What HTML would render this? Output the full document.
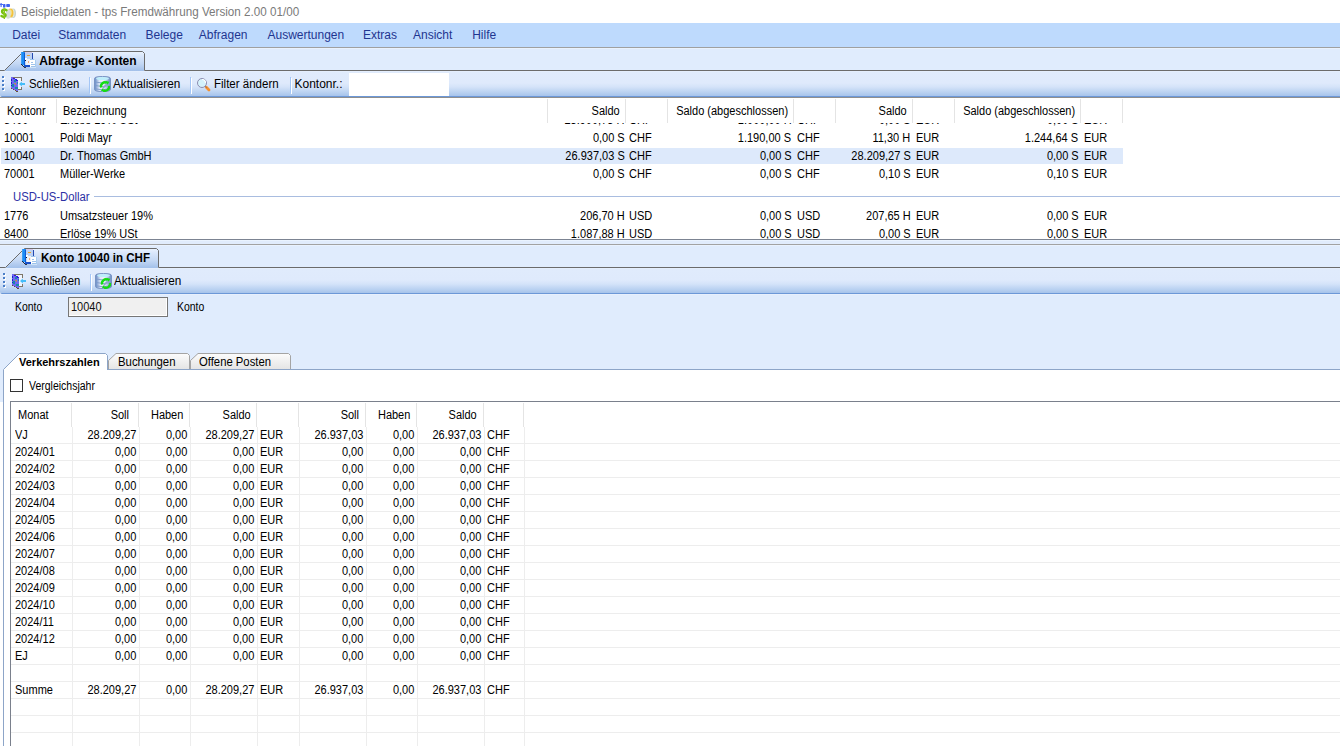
<!DOCTYPE html>
<html><head><meta charset="utf-8"><title>tps Fremdwährung</title>
<style>
html,body{margin:0;padding:0;}
body{width:1340px;height:746px;overflow:hidden;position:relative;background:#fff;font-family:"Liberation Sans", sans-serif;}
.t{position:absolute;line-height:16px;white-space:nowrap;font-family:"Liberation Sans", sans-serif;}
.g{font-size:12px !important;transform:scaleX(0.917);transform-origin:0 0;}
.gr{font-size:12px !important;transform:scaleX(0.917);transform-origin:100% 0;}
.r{position:absolute;}
svg{position:absolute;}
</style></head><body>

<div class="r" style="left:0px;top:0px;width:1340px;height:23px;background:#fff"></div>
<svg style="left:0;top:0" width="18" height="21" viewBox="0 0 18 21">
<rect x="0.5" y="3" width="1.2" height="4" fill="#4a6cf4"/>
<rect x="0" y="4" width="3" height="1" fill="#4a6cf4"/>
<rect x="3" y="4" width="2.5" height="3.5" rx="0.8" fill="#3d62f2"/>
<rect x="6.2" y="4" width="3.8" height="3" rx="0.8" fill="#3d62f2"/>
<rect x="3.5" y="7" width="1" height="1" fill="#6a88f6"/>
<ellipse cx="13" cy="13.2" rx="3" ry="4.8" fill="#c9d3cb"/>
<ellipse cx="12.3" cy="13.2" rx="2.2" ry="4.3" fill="#e6ece6"/>
<ellipse cx="10.5" cy="13" rx="3" ry="4.6" fill="#f3c23c"/>
<ellipse cx="10" cy="12.5" rx="1.8" ry="3" fill="#f8e28a"/>
<ellipse cx="8.2" cy="14" rx="2.6" ry="4.8" fill="#d6ded6"/>
<path d="M6.5 10.2 Q4.5 9 2.8 10 Q1.3 11.3 2.8 13 L5 14.2 Q6.2 15.2 5 16.4 Q3.4 17.2 1.5 16" fill="none" stroke="#78c010" stroke-width="2.4" stroke-linecap="round"/>
<rect x="3.6" y="8.5" width="1.4" height="10.5" fill="#8ac81a"/>
</svg>
<div class="t " style="top:4px;font-size:12px;color:#7a7a7a;left:21px;transform:scaleX(0.972);transform-origin:0 0;">Beispieldaten - tps Fremdwährung Version 2.00 01/00</div>
<div class="r" style="left:0px;top:23px;width:1340px;height:24px;background:#bedafd"></div>
<div class="t " style="top:27px;font-size:12px;color:#1f3590;left:12.2px;">Datei</div>
<div class="t " style="top:27px;font-size:12px;color:#1f3590;left:58.2px;">Stammdaten</div>
<div class="t " style="top:27px;font-size:12px;color:#1f3590;left:145.5px;">Belege</div>
<div class="t " style="top:27px;font-size:12px;color:#1f3590;left:198.8px;">Abfragen</div>
<div class="t " style="top:27px;font-size:12px;color:#1f3590;left:267.5px;">Auswertungen</div>
<div class="t " style="top:27px;font-size:12px;color:#1f3590;left:363px;">Extras</div>
<div class="t " style="top:27px;font-size:12px;color:#1f3590;left:413px;">Ansicht</div>
<div class="t " style="top:27px;font-size:12px;color:#1f3590;left:472.2px;">Hilfe</div>
<div class="r" style="left:0px;top:47px;width:1340px;height:1px;background:#a0a0a0"></div>
<div class="r" style="left:0px;top:48px;width:1340px;height:22px;background:#e0ecfd"></div>
<div class="r" style="left:0px;top:48px;width:1340px;height:1px;background:#e9f2fe"></div>
<svg style="left:0;top:48px" width="148" height="24" viewBox="0 0 148 24">
<defs><linearGradient id="tg48" x1="0" y1="0" x2="0" y2="1"><stop offset="0" stop-color="#e8f1fd"/><stop offset="0.2" stop-color="#dae7fb"/><stop offset="0.6" stop-color="#c4d8f4"/><stop offset="1" stop-color="#a2c0ea"/></linearGradient></defs>
<path d="M4.5 23 L23.5 4 L142 4 L144 6 L144 23 Z" fill="url(#tg48)"/>
<path d="M0 22.5 L4.5 22.5 L23.5 3.5 L142.5 3.5 L144.5 5.5 L144.5 22.5 L148 22.5" fill="none" stroke="#6b6b6b" stroke-width="1"/>
</svg>
<div class="r" style="left:145px;top:70px;width:1195px;height:1px;background:#6b6b6b"></div>
<svg style="left:20px;top:50px" width="18" height="20" viewBox="0 0 18 20" shape-rendering="crispEdges">
<rect x="1" y="2" width="4" height="13" fill="#1d8cf4"/>
<rect x="1" y="2" width="1" height="12" fill="#3aa0f8"/>
<rect x="4" y="3" width="1" height="14" fill="#0d5ad6"/>
<rect x="1" y="14" width="1" height="1" fill="#202840"/><rect x="2" y="15" width="1" height="1" fill="#202840"/><rect x="3" y="16" width="1" height="1" fill="#202840"/><rect x="4" y="17" width="2" height="1" fill="#303848"/>
<rect x="5" y="2" width="7" height="7" fill="#bcd2f2"/>
<rect x="5" y="2" width="7" height="1" fill="#d8c8e8"/>
<rect x="7" y="5" width="3" height="1" fill="#e8a030"/>
<rect x="12" y="3" width="1" height="6" fill="#2548b0"/>
<rect x="5" y="8" width="2" height="2" fill="#ffffff"/>
<rect x="5" y="10" width="1" height="1" fill="#101828"/>
<rect x="6" y="9" width="4" height="8" fill="#eef2f8"/>
<rect x="5" y="15" width="5" height="2" fill="#1a50c8"/>
<rect x="8" y="11" width="1" height="2" fill="#f0b080"/>
<rect x="10" y="9" width="5" height="1" fill="#9cc4ec"/>
<rect x="10" y="10" width="6" height="8" fill="#ffffff"/>
<rect x="15" y="10" width="1" height="8" fill="#a8cdf0"/>
<rect x="14" y="9" width="1" height="1" fill="#c8e0f6"/>
<rect x="10" y="17" width="6" height="1" fill="#d0e4f8"/>
<rect x="11" y="12" width="2" height="1" fill="#9ec2ea"/>
<rect x="11" y="14" width="4" height="1" fill="#9ec2ea"/>
<rect x="11" y="16" width="4" height="1" fill="#9ec2ea"/>
</svg>
<div class="t " style="top:53px;font-size:12px;font-weight:bold;left:39.3px;">Abfrage - Konten</div>
<div class="r" style="left:0;top:71px;width:1340px;height:26px;background:linear-gradient(#e8f1fe 0px,#e0ebfc 1px,#dfeafc 12px,#d4e3f9 16px,#b6cff0 22px,#a6c3eb 25px,#6c98d8 25px);border-bottom-left-radius:2px"></div>
<div class="r" style="left:2px;top:76px;width:2px;height:2px;background:#4a7ec8;box-shadow:1px 1px 0 #fff"></div>
<div class="r" style="left:2px;top:80px;width:2px;height:2px;background:#4a7ec8;box-shadow:1px 1px 0 #fff"></div>
<div class="r" style="left:2px;top:84px;width:2px;height:2px;background:#4a7ec8;box-shadow:1px 1px 0 #fff"></div>
<div class="r" style="left:2px;top:88px;width:2px;height:2px;background:#4a7ec8;box-shadow:1px 1px 0 #fff"></div>
<svg style="left:11px;top:77px" width="16" height="16" viewBox="0 0 16 16" shape-rendering="crispEdges">
<rect x="0" y="0" width="11" height="1" fill="#7d7566"/>
<rect x="10" y="0" width="1" height="4" fill="#7d7566"/>
<rect x="10" y="10" width="1" height="3" fill="#7d7566"/>
<rect x="7" y="12" width="4" height="1" fill="#7d7566"/>
<rect x="7" y="1" width="3" height="11" fill="#eef4fe"/>
<path d="M0 0 H2 V1 H4 V2 H5 V3 H7 V15 H5 V14 H4 V13 H2 V12 H0 Z" fill="#6f66f2"/>
<rect x="0" y="2" width="1" height="2" fill="#1428c8"/>
<rect x="0" y="5" width="1" height="2" fill="#1428c8"/>
<rect x="0" y="8" width="1" height="1" fill="#1428c8"/>
<rect x="2" y="1" width="2" height="1" fill="#2a18e0"/>
<rect x="4" y="2" width="2" height="1" fill="#2a18e0"/>
<rect x="5" y="3" width="2" height="1" fill="#2a18e0"/>
<rect x="3" y="3" width="2" height="2" fill="#1a8aa8"/>
<rect x="1" y="7" width="2" height="3" fill="#1a8aa8"/>
<rect x="4" y="10" width="3" height="2" fill="#1a8aa8"/>
<rect x="6" y="5" width="1" height="2" fill="#1a8aa8"/>
<rect x="3" y="6" width="2" height="1" fill="#b09060"/>
<rect x="4" y="7" width="1" height="1" fill="#b09060"/>
<rect x="0" y="11" width="1" height="1" fill="#6a5030"/><rect x="2" y="12" width="1" height="1" fill="#6a5030"/><rect x="4" y="13" width="1" height="1" fill="#6a5030"/><rect x="5" y="14" width="2" height="1" fill="#6a5030"/>
<path d="M8 7 L10.8 4.6 L10.8 6 L14 6 L14 8 L10.8 8 L10.8 9.4 Z" fill="#44bcf8" shape-rendering="auto"/>
</svg>
<div class="t " style="top:76px;font-size:12px;left:28.5px;transform:scaleX(0.944);transform-origin:0 0;">Schließen</div>
<div class="r" style="left:89px;top:77px;width:1px;height:16px;background:#a4c6f6"></div>
<div class="r" style="left:90px;top:78px;width:1px;height:16px;background:#ffffff"></div>
<svg style="left:94px;top:76px" width="17" height="17" viewBox="0 0 17 17">
<defs><linearGradient id="dbg76" x1="0" y1="0" x2="1" y2="0"><stop offset="0" stop-color="#5f84c2"/><stop offset="0.3" stop-color="#dfe8f8"/><stop offset="0.55" stop-color="#eef3fb"/><stop offset="1" stop-color="#6a8cc4"/></linearGradient></defs>
<path d="M0.5 2.5 Q0.5 0.5 8.5 0.5 Q16.5 0.5 16.5 2.5 L16.5 13.5 Q16.5 15.5 8.5 15.5 Q0.5 15.5 0.5 13.5 Z" fill="url(#dbg76)" stroke="#7894c4" stroke-width="1"/>
<ellipse cx="8.5" cy="2.6" rx="6.5" ry="1.5" fill="#bdeefb"/>
<path d="M1 6 Q8 8 16 6 M1 9.5 Q8 11.5 16 9.5 M1 12.8 Q8 14.8 16 12.8" stroke="#7b98c8" stroke-width="0.9" fill="none"/>
<path d="M7.2 11.5 A3.9 3.9 0 0 1 13 7" fill="none" stroke="#14dc14" stroke-width="2.4"/>
<path d="M15 10 A3.9 3.9 0 0 1 9.5 14.3" fill="none" stroke="#14dc14" stroke-width="2.4"/>
<path d="M11.5 5 L15.3 5.8 L13.6 9 Z" fill="#14dc14"/>
<path d="M10.5 16 L6.8 14.6 L9 12 Z" fill="#14dc14"/>
<path d="M8.8 12.2 L13 8" stroke="#8fa4cc" stroke-width="1.6"/>
</svg>
<div class="t " style="top:76px;font-size:12px;left:112.8px;transform:scaleX(0.98);transform-origin:0 0;">Aktualisieren</div>
<div class="r" style="left:190px;top:77px;width:1px;height:16px;background:#a4c6f6"></div>
<div class="r" style="left:191px;top:78px;width:1px;height:16px;background:#ffffff"></div>
<svg style="left:196px;top:77px" width="16" height="16" viewBox="0 0 16 16">
<circle cx="6" cy="6" r="4.5" fill="#d4f2fc" stroke="#8c8cb0" stroke-width="1"/>
<path d="M6 2.5 A3.5 3.5 0 0 1 9.5 6" stroke="#ffffff" stroke-width="1.2" fill="none"/>
<path d="M10.3 10.3 L13 13" stroke="#f5902e" stroke-width="2.8" stroke-linecap="round"/>
<path d="M9.5 9.5 L10.5 10.5" stroke="#606080" stroke-width="1"/>
</svg>
<div class="t " style="top:76px;font-size:12px;left:214.3px;transform:scaleX(0.96);transform-origin:0 0;">Filter ändern</div>
<div class="r" style="left:290px;top:77px;width:1px;height:16px;background:#a4c6f6"></div>
<div class="r" style="left:291px;top:78px;width:1px;height:16px;background:#ffffff"></div>
<div class="t " style="top:76px;font-size:12px;left:294.5px;">Kontonr.:</div>
<div class="r" style="left:349px;top:73px;width:100px;height:23px;background:#fff"></div>
<div class="r" style="left:0px;top:97px;width:1340px;height:1px;background:#8e8e8e"></div>
<div class="r" style="left:0px;top:98px;width:1340px;height:141px;background:#fff"></div>
<div class="r" style="left:56px;top:99px;width:1px;height:24px;background:#e4e4e4"></div>
<div class="r" style="left:547px;top:99px;width:1px;height:24px;background:#e4e4e4"></div>
<div class="r" style="left:625px;top:99px;width:1px;height:24px;background:#e4e4e4"></div>
<div class="r" style="left:667px;top:99px;width:1px;height:24px;background:#e4e4e4"></div>
<div class="r" style="left:793px;top:99px;width:1px;height:24px;background:#e4e4e4"></div>
<div class="r" style="left:835px;top:99px;width:1px;height:24px;background:#e4e4e4"></div>
<div class="r" style="left:912px;top:99px;width:1px;height:24px;background:#e4e4e4"></div>
<div class="r" style="left:954px;top:99px;width:1px;height:24px;background:#e4e4e4"></div>
<div class="r" style="left:1080px;top:99px;width:1px;height:24px;background:#e4e4e4"></div>
<div class="r" style="left:1122px;top:99px;width:1px;height:24px;background:#e4e4e4"></div>
<div class="t g" style="top:103px;font-size:11px;left:7.2px;">Kontonr</div>
<div class="t g" style="top:103px;font-size:11px;left:63px;">Bezeichnung</div>
<div class="t gr" style="top:103px;font-size:11px;right:720.5px;text-align:right;">Saldo</div>
<div class="t gr" style="top:103px;font-size:11px;right:433.5px;text-align:right;">Saldo</div>
<div class="t gr" style="top:103px;font-size:11px;right:552px;text-align:right;">Saldo (abgeschlossen)</div>
<div class="t gr" style="top:103px;font-size:11px;right:265px;text-align:right;">Saldo (abgeschlossen)</div>
<div class="r" style="left:0;top:123px;width:1340px;height:116px;overflow:hidden">
<div class="t g" style="left:3.8px;top:-11px">8400</div>
<div class="t g" style="left:60px;top:-11px">Erlöse 19% USt</div>
<div class="t gr" style="right:715.5px;top:-11px;text-align:right">23.900,73 H</div>
<div class="t gr" style="right:548.5px;top:-11px;text-align:right">1.000,00 H</div>
<div class="t gr" style="right:429.5px;top:-11px;text-align:right">0,00 S</div>
<div class="t gr" style="right:261.5px;top:-11px;text-align:right">0,00 S</div>
<div class="t g" style="left:628.5px;top:-11px">CHF</div>
<div class="t g" style="left:796.5px;top:-11px">CHF</div>
<div class="t g" style="left:915.5px;top:-11px">EUR</div>
<div class="t g" style="left:1083.5px;top:-11px">EUR</div>
<div class="t g" style="left:3.8px;top:7px">10001</div>
<div class="t g" style="left:60px;top:7px">Poldi Mayr</div>
<div class="t gr" style="right:715.5px;top:7px;text-align:right">0,00 S</div>
<div class="t gr" style="right:548.5px;top:7px;text-align:right">1.190,00 S</div>
<div class="t gr" style="right:429.5px;top:7px;text-align:right">11,30 H</div>
<div class="t gr" style="right:261.5px;top:7px;text-align:right">1.244,64 S</div>
<div class="t g" style="left:628.5px;top:7px">CHF</div>
<div class="t g" style="left:796.5px;top:7px">CHF</div>
<div class="t g" style="left:915.5px;top:7px">EUR</div>
<div class="t g" style="left:1083.5px;top:7px">EUR</div>
<div class="r" style="left:1px;top:25px;width:1122px;height:16px;background:#dde9fb"></div>
<div class="t g" style="left:3.8px;top:25px">10040</div>
<div class="t g" style="left:60px;top:25px">Dr. Thomas GmbH</div>
<div class="t gr" style="right:715.5px;top:25px;text-align:right">26.937,03 S</div>
<div class="t gr" style="right:548.5px;top:25px;text-align:right">0,00 S</div>
<div class="t gr" style="right:429.5px;top:25px;text-align:right">28.209,27 S</div>
<div class="t gr" style="right:261.5px;top:25px;text-align:right">0,00 S</div>
<div class="t g" style="left:628.5px;top:25px">CHF</div>
<div class="t g" style="left:796.5px;top:25px">CHF</div>
<div class="t g" style="left:915.5px;top:25px">EUR</div>
<div class="t g" style="left:1083.5px;top:25px">EUR</div>
<div class="t g" style="left:3.8px;top:43px">70001</div>
<div class="t g" style="left:60px;top:43px">Müller-Werke</div>
<div class="t gr" style="right:715.5px;top:43px;text-align:right">0,00 S</div>
<div class="t gr" style="right:548.5px;top:43px;text-align:right">0,00 S</div>
<div class="t gr" style="right:429.5px;top:43px;text-align:right">0,10 S</div>
<div class="t gr" style="right:261.5px;top:43px;text-align:right">0,10 S</div>
<div class="t g" style="left:628.5px;top:43px">CHF</div>
<div class="t g" style="left:796.5px;top:43px">CHF</div>
<div class="t g" style="left:915.5px;top:43px">EUR</div>
<div class="t g" style="left:1083.5px;top:43px">EUR</div>
<div class="t" style="left:12.5px;top:66px;font-size:12px;color:#2c30a4;transform:scaleX(0.942);transform-origin:0 0">USD-US-Dollar</div>
<div class="r" style="left:94px;top:73px;width:1246px;height:1px;background:#a9bde0"></div>
<div class="t g" style="left:3.8px;top:85px">1776</div>
<div class="t g" style="left:60px;top:85px">Umsatzsteuer 19%</div>
<div class="t gr" style="right:715.5px;top:85px;text-align:right">206,70 H</div>
<div class="t gr" style="right:548.5px;top:85px;text-align:right">0,00 S</div>
<div class="t gr" style="right:429.5px;top:85px;text-align:right">207,65 H</div>
<div class="t gr" style="right:261.5px;top:85px;text-align:right">0,00 S</div>
<div class="t g" style="left:628.5px;top:85px">USD</div>
<div class="t g" style="left:796.5px;top:85px">USD</div>
<div class="t g" style="left:915.5px;top:85px">EUR</div>
<div class="t g" style="left:1083.5px;top:85px">EUR</div>
<div class="t g" style="left:3.8px;top:103px">8400</div>
<div class="t g" style="left:60px;top:103px">Erlöse 19% USt</div>
<div class="t gr" style="right:715.5px;top:103px;text-align:right">1.087,88 H</div>
<div class="t gr" style="right:548.5px;top:103px;text-align:right">0,00 S</div>
<div class="t gr" style="right:429.5px;top:103px;text-align:right">0,00 S</div>
<div class="t gr" style="right:261.5px;top:103px;text-align:right">0,00 S</div>
<div class="t g" style="left:628.5px;top:103px">USD</div>
<div class="t g" style="left:796.5px;top:103px">USD</div>
<div class="t g" style="left:915.5px;top:103px">EUR</div>
<div class="t g" style="left:1083.5px;top:103px">EUR</div>
</div>
<div class="r" style="left:0px;top:239px;width:1340px;height:1px;background:#7c8492"></div>
<div class="r" style="left:0px;top:240px;width:1340px;height:4px;background:#e1ecfc"></div>
<div class="r" style="left:0px;top:240px;width:1340px;height:1px;background:#eaf3fe"></div>
<div class="r" style="left:0px;top:244px;width:1340px;height:1px;background:#a2a2a2"></div>
<div class="r" style="left:0px;top:245px;width:1340px;height:22px;background:#e0ecfd"></div>
<div class="r" style="left:0px;top:245px;width:1340px;height:1px;background:#e9f2fe"></div>
<svg style="left:0;top:245px" width="162" height="24" viewBox="0 0 162 24">
<defs><linearGradient id="tg245" x1="0" y1="0" x2="0" y2="1"><stop offset="0" stop-color="#e8f1fd"/><stop offset="0.2" stop-color="#dae7fb"/><stop offset="0.6" stop-color="#c4d8f4"/><stop offset="1" stop-color="#a2c0ea"/></linearGradient></defs>
<path d="M5.5 23 L24.5 4 L156 4 L158 6 L158 23 Z" fill="url(#tg245)"/>
<path d="M0 22.5 L5.5 22.5 L24.5 3.5 L156.5 3.5 L158.5 5.5 L158.5 22.5 L162 22.5" fill="none" stroke="#6b6b6b" stroke-width="1"/>
</svg>
<div class="r" style="left:159px;top:267px;width:1181px;height:1px;background:#6b6b6b"></div>
<svg style="left:21px;top:247px" width="18" height="20" viewBox="0 0 18 20" shape-rendering="crispEdges">
<rect x="1" y="2" width="4" height="13" fill="#1d8cf4"/>
<rect x="1" y="2" width="1" height="12" fill="#3aa0f8"/>
<rect x="4" y="3" width="1" height="14" fill="#0d5ad6"/>
<rect x="1" y="14" width="1" height="1" fill="#202840"/><rect x="2" y="15" width="1" height="1" fill="#202840"/><rect x="3" y="16" width="1" height="1" fill="#202840"/><rect x="4" y="17" width="2" height="1" fill="#303848"/>
<rect x="5" y="2" width="7" height="7" fill="#bcd2f2"/>
<rect x="5" y="2" width="7" height="1" fill="#d8c8e8"/>
<rect x="7" y="5" width="3" height="1" fill="#e8a030"/>
<rect x="12" y="3" width="1" height="6" fill="#2548b0"/>
<rect x="5" y="8" width="2" height="2" fill="#ffffff"/>
<rect x="5" y="10" width="1" height="1" fill="#101828"/>
<rect x="6" y="9" width="4" height="8" fill="#eef2f8"/>
<rect x="5" y="15" width="5" height="2" fill="#1a50c8"/>
<rect x="8" y="11" width="1" height="2" fill="#f0b080"/>
<rect x="10" y="9" width="5" height="1" fill="#9cc4ec"/>
<rect x="10" y="10" width="6" height="8" fill="#ffffff"/>
<rect x="15" y="10" width="1" height="8" fill="#a8cdf0"/>
<rect x="14" y="9" width="1" height="1" fill="#c8e0f6"/>
<rect x="10" y="17" width="6" height="1" fill="#d0e4f8"/>
<rect x="11" y="12" width="2" height="1" fill="#9ec2ea"/>
<rect x="11" y="14" width="4" height="1" fill="#9ec2ea"/>
<rect x="11" y="16" width="4" height="1" fill="#9ec2ea"/>
</svg>
<div class="t " style="top:250px;font-size:12px;font-weight:bold;left:41px;transform:scaleX(0.961);transform-origin:0 0;">Konto 10040 in CHF</div>
<div class="r" style="left:0;top:268px;width:1340px;height:26px;background:linear-gradient(#e8f1fe 0px,#e0ebfc 1px,#dfeafc 12px,#d4e3f9 16px,#b6cff0 22px,#a6c3eb 25px,#6c98d8 25px);border-bottom-left-radius:2px"></div>
<div class="r" style="left:3px;top:273px;width:2px;height:2px;background:#4a7ec8;box-shadow:1px 1px 0 #fff"></div>
<div class="r" style="left:3px;top:277px;width:2px;height:2px;background:#4a7ec8;box-shadow:1px 1px 0 #fff"></div>
<div class="r" style="left:3px;top:281px;width:2px;height:2px;background:#4a7ec8;box-shadow:1px 1px 0 #fff"></div>
<div class="r" style="left:3px;top:285px;width:2px;height:2px;background:#4a7ec8;box-shadow:1px 1px 0 #fff"></div>
<svg style="left:12px;top:274px" width="16" height="16" viewBox="0 0 16 16" shape-rendering="crispEdges">
<rect x="0" y="0" width="11" height="1" fill="#7d7566"/>
<rect x="10" y="0" width="1" height="4" fill="#7d7566"/>
<rect x="10" y="10" width="1" height="3" fill="#7d7566"/>
<rect x="7" y="12" width="4" height="1" fill="#7d7566"/>
<rect x="7" y="1" width="3" height="11" fill="#eef4fe"/>
<path d="M0 0 H2 V1 H4 V2 H5 V3 H7 V15 H5 V14 H4 V13 H2 V12 H0 Z" fill="#6f66f2"/>
<rect x="0" y="2" width="1" height="2" fill="#1428c8"/>
<rect x="0" y="5" width="1" height="2" fill="#1428c8"/>
<rect x="0" y="8" width="1" height="1" fill="#1428c8"/>
<rect x="2" y="1" width="2" height="1" fill="#2a18e0"/>
<rect x="4" y="2" width="2" height="1" fill="#2a18e0"/>
<rect x="5" y="3" width="2" height="1" fill="#2a18e0"/>
<rect x="3" y="3" width="2" height="2" fill="#1a8aa8"/>
<rect x="1" y="7" width="2" height="3" fill="#1a8aa8"/>
<rect x="4" y="10" width="3" height="2" fill="#1a8aa8"/>
<rect x="6" y="5" width="1" height="2" fill="#1a8aa8"/>
<rect x="3" y="6" width="2" height="1" fill="#b09060"/>
<rect x="4" y="7" width="1" height="1" fill="#b09060"/>
<rect x="0" y="11" width="1" height="1" fill="#6a5030"/><rect x="2" y="12" width="1" height="1" fill="#6a5030"/><rect x="4" y="13" width="1" height="1" fill="#6a5030"/><rect x="5" y="14" width="2" height="1" fill="#6a5030"/>
<path d="M8 7 L10.8 4.6 L10.8 6 L14 6 L14 8 L10.8 8 L10.8 9.4 Z" fill="#44bcf8" shape-rendering="auto"/>
</svg>
<div class="t " style="top:273px;font-size:12px;left:29.5px;transform:scaleX(0.944);transform-origin:0 0;">Schließen</div>
<div class="r" style="left:90px;top:274px;width:1px;height:16px;background:#a4c6f6"></div>
<div class="r" style="left:91px;top:275px;width:1px;height:16px;background:#ffffff"></div>
<svg style="left:95px;top:273px" width="17" height="17" viewBox="0 0 17 17">
<defs><linearGradient id="dbg273" x1="0" y1="0" x2="1" y2="0"><stop offset="0" stop-color="#5f84c2"/><stop offset="0.3" stop-color="#dfe8f8"/><stop offset="0.55" stop-color="#eef3fb"/><stop offset="1" stop-color="#6a8cc4"/></linearGradient></defs>
<path d="M0.5 2.5 Q0.5 0.5 8.5 0.5 Q16.5 0.5 16.5 2.5 L16.5 13.5 Q16.5 15.5 8.5 15.5 Q0.5 15.5 0.5 13.5 Z" fill="url(#dbg273)" stroke="#7894c4" stroke-width="1"/>
<ellipse cx="8.5" cy="2.6" rx="6.5" ry="1.5" fill="#bdeefb"/>
<path d="M1 6 Q8 8 16 6 M1 9.5 Q8 11.5 16 9.5 M1 12.8 Q8 14.8 16 12.8" stroke="#7b98c8" stroke-width="0.9" fill="none"/>
<path d="M7.2 11.5 A3.9 3.9 0 0 1 13 7" fill="none" stroke="#14dc14" stroke-width="2.4"/>
<path d="M15 10 A3.9 3.9 0 0 1 9.5 14.3" fill="none" stroke="#14dc14" stroke-width="2.4"/>
<path d="M11.5 5 L15.3 5.8 L13.6 9 Z" fill="#14dc14"/>
<path d="M10.5 16 L6.8 14.6 L9 12 Z" fill="#14dc14"/>
<path d="M8.8 12.2 L13 8" stroke="#8fa4cc" stroke-width="1.6"/>
</svg>
<div class="t " style="top:273px;font-size:12px;left:113.8px;transform:scaleX(0.98);transform-origin:0 0;">Aktualisieren</div>
<div class="r" style="left:0px;top:294px;width:1340px;height:108px;background:#e0ecfd"></div>
<div class="r" style="left:0px;top:294px;width:1340px;height:1px;background:#e8f0fd"></div>
<div class="t " style="top:299px;font-size:12px;left:15px;transform:scaleX(0.87);transform-origin:0 0;">Konto</div>
<div class="r" style="left:68px;top:297px;width:100px;height:20px;background:#f0f0f0;box-sizing:border-box;border:1px solid #767676;box-shadow:inset -1px -1px 0 #fff"></div>
<div class="t g" style="top:299px;font-size:11px;color:#111;left:71px;">10040</div>
<div class="t " style="top:299px;font-size:12px;left:177px;transform:scaleX(0.87);transform-origin:0 0;">Konto</div>
<svg style="left:0;top:350px" width="300" height="21" viewBox="0 0 300 21">
<defs><linearGradient id="ut" x1="0" y1="0" x2="0" y2="1"><stop offset="0" stop-color="#fcfcfc"/><stop offset="1" stop-color="#e4e4e4"/></linearGradient></defs>
<path d="M108.5 19.5 L108.5 10.5 L116 3.5 L187.5 3.5 L189.5 5.5 L189.5 19.5 Z" fill="url(#ut)" stroke="#a4a4a4" stroke-width="1"/>
<path d="M190.5 19.5 L190.5 10.5 L198 3.5 L288.5 3.5 L290.5 5.5 L290.5 19.5 Z" fill="url(#ut)" stroke="#a4a4a4" stroke-width="1"/>
<path d="M3 21 L3 20 L19.5 3.5 L105.5 3.5 L107.5 5.5 L107.5 21 Z" fill="#fff"/>
<path d="M3.5 21 L3.5 19.5 L19.5 3.5 L105.5 3.5 L107.5 5.5 L107.5 19.5" fill="none" stroke="#8da5c8" stroke-width="1"/>
</svg>
<div class="t " style="top:354px;font-size:11px;font-weight:bold;left:19px;">Verkehrszahlen</div>
<div class="t " style="top:354px;font-size:12px;left:117.5px;transform:scaleX(0.947);transform-origin:0 0;">Buchungen</div>
<div class="t " style="top:354px;font-size:12px;left:199.4px;transform:scaleX(0.941);transform-origin:0 0;">Offene Posten</div>
<div class="r" style="left:3px;top:370px;width:1337px;height:376px;background:#fff;box-sizing:border-box;border-left:1px solid #8da5c8"></div>
<div class="r" style="left:107px;top:369px;width:1233px;height:1px;background:#8da5c8"></div>
<div class="r" style="left:10px;top:379px;width:13px;height:13px;background:#fff;box-sizing:border-box;border:1px solid #333"></div>
<div class="t " style="top:378px;font-size:12px;left:28.5px;transform:scaleX(0.875);transform-origin:0 0;">Vergleichsjahr</div>
<div class="r" style="left:10px;top:401px;width:1330px;height:345px;background:#fff;box-sizing:border-box;border-left:1px solid #7a808c;border-top:1px solid #7a808c"></div>
<div class="r" style="left:71px;top:403px;width:1px;height:24px;background:#e4e4e4"></div>
<div class="r" style="left:138px;top:403px;width:1px;height:24px;background:#e4e4e4"></div>
<div class="r" style="left:189px;top:403px;width:1px;height:24px;background:#e4e4e4"></div>
<div class="r" style="left:256px;top:403px;width:1px;height:24px;background:#e4e4e4"></div>
<div class="r" style="left:298px;top:403px;width:1px;height:24px;background:#e4e4e4"></div>
<div class="r" style="left:365px;top:403px;width:1px;height:24px;background:#e4e4e4"></div>
<div class="r" style="left:416px;top:403px;width:1px;height:24px;background:#e4e4e4"></div>
<div class="r" style="left:483px;top:403px;width:1px;height:24px;background:#e4e4e4"></div>
<div class="r" style="left:523px;top:403px;width:1px;height:24px;background:#e4e4e4"></div>
<div class="t g" style="top:407px;font-size:11px;left:17.5px;">Monat</div>
<div class="t gr" style="top:407px;font-size:11px;right:1210.5px;text-align:right;">Soll</div>
<div class="t gr" style="top:407px;font-size:11px;right:1156.5px;text-align:right;">Haben</div>
<div class="t gr" style="top:407px;font-size:11px;right:1089.7px;text-align:right;">Saldo</div>
<div class="t gr" style="top:407px;font-size:11px;right:980.5px;text-align:right;">Soll</div>
<div class="t gr" style="top:407px;font-size:11px;right:929.7px;text-align:right;">Haben</div>
<div class="t gr" style="top:407px;font-size:11px;right:863px;text-align:right;">Saldo</div>
<div class="r" style="left:72px;top:427px;width:1px;height:319px;background:#ededed"></div>
<div class="r" style="left:139px;top:427px;width:1px;height:319px;background:#ededed"></div>
<div class="r" style="left:190px;top:427px;width:1px;height:319px;background:#ededed"></div>
<div class="r" style="left:257px;top:427px;width:1px;height:319px;background:#ededed"></div>
<div class="r" style="left:299px;top:427px;width:1px;height:319px;background:#ededed"></div>
<div class="r" style="left:366px;top:427px;width:1px;height:319px;background:#ededed"></div>
<div class="r" style="left:417px;top:427px;width:1px;height:319px;background:#ededed"></div>
<div class="r" style="left:484px;top:427px;width:1px;height:319px;background:#ededed"></div>
<div class="r" style="left:524px;top:427px;width:1px;height:319px;background:#ededed"></div>
<div class="r" style="left:11px;top:443px;width:1329px;height:1px;background:#ededed"></div>
<div class="r" style="left:11px;top:460px;width:1329px;height:1px;background:#ededed"></div>
<div class="r" style="left:11px;top:477px;width:1329px;height:1px;background:#ededed"></div>
<div class="r" style="left:11px;top:494px;width:1329px;height:1px;background:#ededed"></div>
<div class="r" style="left:11px;top:511px;width:1329px;height:1px;background:#ededed"></div>
<div class="r" style="left:11px;top:528px;width:1329px;height:1px;background:#ededed"></div>
<div class="r" style="left:11px;top:545px;width:1329px;height:1px;background:#ededed"></div>
<div class="r" style="left:11px;top:562px;width:1329px;height:1px;background:#ededed"></div>
<div class="r" style="left:11px;top:579px;width:1329px;height:1px;background:#ededed"></div>
<div class="r" style="left:11px;top:596px;width:1329px;height:1px;background:#ededed"></div>
<div class="r" style="left:11px;top:613px;width:1329px;height:1px;background:#ededed"></div>
<div class="r" style="left:11px;top:630px;width:1329px;height:1px;background:#ededed"></div>
<div class="r" style="left:11px;top:647px;width:1329px;height:1px;background:#ededed"></div>
<div class="r" style="left:11px;top:664px;width:1329px;height:1px;background:#ededed"></div>
<div class="r" style="left:11px;top:681px;width:1329px;height:1px;background:#ededed"></div>
<div class="r" style="left:11px;top:698px;width:1329px;height:1px;background:#ededed"></div>
<div class="r" style="left:11px;top:715px;width:1329px;height:1px;background:#ededed"></div>
<div class="r" style="left:11px;top:732px;width:1329px;height:1px;background:#ededed"></div>
<div class="t g" style="top:427px;font-size:11px;left:15px;">VJ</div>
<div class="t gr" style="top:427px;font-size:11px;right:1203.7px;text-align:right;">28.209,27</div>
<div class="t gr" style="top:427px;font-size:11px;right:1152.7px;text-align:right;">0,00</div>
<div class="t gr" style="top:427px;font-size:11px;right:1085.7px;text-align:right;">28.209,27</div>
<div class="t g" style="top:427px;font-size:11px;left:259.5px;">EUR</div>
<div class="t gr" style="top:427px;font-size:11px;right:976.7px;text-align:right;">26.937,03</div>
<div class="t gr" style="top:427px;font-size:11px;right:925.7px;text-align:right;">0,00</div>
<div class="t gr" style="top:427px;font-size:11px;right:858.7px;text-align:right;">26.937,03</div>
<div class="t g" style="top:427px;font-size:11px;left:486.5px;">CHF</div>
<div class="t g" style="top:444px;font-size:11px;left:15px;">2024/01</div>
<div class="t gr" style="top:444px;font-size:11px;right:1203.7px;text-align:right;">0,00</div>
<div class="t gr" style="top:444px;font-size:11px;right:1152.7px;text-align:right;">0,00</div>
<div class="t gr" style="top:444px;font-size:11px;right:1085.7px;text-align:right;">0,00</div>
<div class="t g" style="top:444px;font-size:11px;left:259.5px;">EUR</div>
<div class="t gr" style="top:444px;font-size:11px;right:976.7px;text-align:right;">0,00</div>
<div class="t gr" style="top:444px;font-size:11px;right:925.7px;text-align:right;">0,00</div>
<div class="t gr" style="top:444px;font-size:11px;right:858.7px;text-align:right;">0,00</div>
<div class="t g" style="top:444px;font-size:11px;left:486.5px;">CHF</div>
<div class="t g" style="top:461px;font-size:11px;left:15px;">2024/02</div>
<div class="t gr" style="top:461px;font-size:11px;right:1203.7px;text-align:right;">0,00</div>
<div class="t gr" style="top:461px;font-size:11px;right:1152.7px;text-align:right;">0,00</div>
<div class="t gr" style="top:461px;font-size:11px;right:1085.7px;text-align:right;">0,00</div>
<div class="t g" style="top:461px;font-size:11px;left:259.5px;">EUR</div>
<div class="t gr" style="top:461px;font-size:11px;right:976.7px;text-align:right;">0,00</div>
<div class="t gr" style="top:461px;font-size:11px;right:925.7px;text-align:right;">0,00</div>
<div class="t gr" style="top:461px;font-size:11px;right:858.7px;text-align:right;">0,00</div>
<div class="t g" style="top:461px;font-size:11px;left:486.5px;">CHF</div>
<div class="t g" style="top:478px;font-size:11px;left:15px;">2024/03</div>
<div class="t gr" style="top:478px;font-size:11px;right:1203.7px;text-align:right;">0,00</div>
<div class="t gr" style="top:478px;font-size:11px;right:1152.7px;text-align:right;">0,00</div>
<div class="t gr" style="top:478px;font-size:11px;right:1085.7px;text-align:right;">0,00</div>
<div class="t g" style="top:478px;font-size:11px;left:259.5px;">EUR</div>
<div class="t gr" style="top:478px;font-size:11px;right:976.7px;text-align:right;">0,00</div>
<div class="t gr" style="top:478px;font-size:11px;right:925.7px;text-align:right;">0,00</div>
<div class="t gr" style="top:478px;font-size:11px;right:858.7px;text-align:right;">0,00</div>
<div class="t g" style="top:478px;font-size:11px;left:486.5px;">CHF</div>
<div class="t g" style="top:495px;font-size:11px;left:15px;">2024/04</div>
<div class="t gr" style="top:495px;font-size:11px;right:1203.7px;text-align:right;">0,00</div>
<div class="t gr" style="top:495px;font-size:11px;right:1152.7px;text-align:right;">0,00</div>
<div class="t gr" style="top:495px;font-size:11px;right:1085.7px;text-align:right;">0,00</div>
<div class="t g" style="top:495px;font-size:11px;left:259.5px;">EUR</div>
<div class="t gr" style="top:495px;font-size:11px;right:976.7px;text-align:right;">0,00</div>
<div class="t gr" style="top:495px;font-size:11px;right:925.7px;text-align:right;">0,00</div>
<div class="t gr" style="top:495px;font-size:11px;right:858.7px;text-align:right;">0,00</div>
<div class="t g" style="top:495px;font-size:11px;left:486.5px;">CHF</div>
<div class="t g" style="top:512px;font-size:11px;left:15px;">2024/05</div>
<div class="t gr" style="top:512px;font-size:11px;right:1203.7px;text-align:right;">0,00</div>
<div class="t gr" style="top:512px;font-size:11px;right:1152.7px;text-align:right;">0,00</div>
<div class="t gr" style="top:512px;font-size:11px;right:1085.7px;text-align:right;">0,00</div>
<div class="t g" style="top:512px;font-size:11px;left:259.5px;">EUR</div>
<div class="t gr" style="top:512px;font-size:11px;right:976.7px;text-align:right;">0,00</div>
<div class="t gr" style="top:512px;font-size:11px;right:925.7px;text-align:right;">0,00</div>
<div class="t gr" style="top:512px;font-size:11px;right:858.7px;text-align:right;">0,00</div>
<div class="t g" style="top:512px;font-size:11px;left:486.5px;">CHF</div>
<div class="t g" style="top:529px;font-size:11px;left:15px;">2024/06</div>
<div class="t gr" style="top:529px;font-size:11px;right:1203.7px;text-align:right;">0,00</div>
<div class="t gr" style="top:529px;font-size:11px;right:1152.7px;text-align:right;">0,00</div>
<div class="t gr" style="top:529px;font-size:11px;right:1085.7px;text-align:right;">0,00</div>
<div class="t g" style="top:529px;font-size:11px;left:259.5px;">EUR</div>
<div class="t gr" style="top:529px;font-size:11px;right:976.7px;text-align:right;">0,00</div>
<div class="t gr" style="top:529px;font-size:11px;right:925.7px;text-align:right;">0,00</div>
<div class="t gr" style="top:529px;font-size:11px;right:858.7px;text-align:right;">0,00</div>
<div class="t g" style="top:529px;font-size:11px;left:486.5px;">CHF</div>
<div class="t g" style="top:546px;font-size:11px;left:15px;">2024/07</div>
<div class="t gr" style="top:546px;font-size:11px;right:1203.7px;text-align:right;">0,00</div>
<div class="t gr" style="top:546px;font-size:11px;right:1152.7px;text-align:right;">0,00</div>
<div class="t gr" style="top:546px;font-size:11px;right:1085.7px;text-align:right;">0,00</div>
<div class="t g" style="top:546px;font-size:11px;left:259.5px;">EUR</div>
<div class="t gr" style="top:546px;font-size:11px;right:976.7px;text-align:right;">0,00</div>
<div class="t gr" style="top:546px;font-size:11px;right:925.7px;text-align:right;">0,00</div>
<div class="t gr" style="top:546px;font-size:11px;right:858.7px;text-align:right;">0,00</div>
<div class="t g" style="top:546px;font-size:11px;left:486.5px;">CHF</div>
<div class="t g" style="top:563px;font-size:11px;left:15px;">2024/08</div>
<div class="t gr" style="top:563px;font-size:11px;right:1203.7px;text-align:right;">0,00</div>
<div class="t gr" style="top:563px;font-size:11px;right:1152.7px;text-align:right;">0,00</div>
<div class="t gr" style="top:563px;font-size:11px;right:1085.7px;text-align:right;">0,00</div>
<div class="t g" style="top:563px;font-size:11px;left:259.5px;">EUR</div>
<div class="t gr" style="top:563px;font-size:11px;right:976.7px;text-align:right;">0,00</div>
<div class="t gr" style="top:563px;font-size:11px;right:925.7px;text-align:right;">0,00</div>
<div class="t gr" style="top:563px;font-size:11px;right:858.7px;text-align:right;">0,00</div>
<div class="t g" style="top:563px;font-size:11px;left:486.5px;">CHF</div>
<div class="t g" style="top:580px;font-size:11px;left:15px;">2024/09</div>
<div class="t gr" style="top:580px;font-size:11px;right:1203.7px;text-align:right;">0,00</div>
<div class="t gr" style="top:580px;font-size:11px;right:1152.7px;text-align:right;">0,00</div>
<div class="t gr" style="top:580px;font-size:11px;right:1085.7px;text-align:right;">0,00</div>
<div class="t g" style="top:580px;font-size:11px;left:259.5px;">EUR</div>
<div class="t gr" style="top:580px;font-size:11px;right:976.7px;text-align:right;">0,00</div>
<div class="t gr" style="top:580px;font-size:11px;right:925.7px;text-align:right;">0,00</div>
<div class="t gr" style="top:580px;font-size:11px;right:858.7px;text-align:right;">0,00</div>
<div class="t g" style="top:580px;font-size:11px;left:486.5px;">CHF</div>
<div class="t g" style="top:597px;font-size:11px;left:15px;">2024/10</div>
<div class="t gr" style="top:597px;font-size:11px;right:1203.7px;text-align:right;">0,00</div>
<div class="t gr" style="top:597px;font-size:11px;right:1152.7px;text-align:right;">0,00</div>
<div class="t gr" style="top:597px;font-size:11px;right:1085.7px;text-align:right;">0,00</div>
<div class="t g" style="top:597px;font-size:11px;left:259.5px;">EUR</div>
<div class="t gr" style="top:597px;font-size:11px;right:976.7px;text-align:right;">0,00</div>
<div class="t gr" style="top:597px;font-size:11px;right:925.7px;text-align:right;">0,00</div>
<div class="t gr" style="top:597px;font-size:11px;right:858.7px;text-align:right;">0,00</div>
<div class="t g" style="top:597px;font-size:11px;left:486.5px;">CHF</div>
<div class="t g" style="top:614px;font-size:11px;left:15px;">2024/11</div>
<div class="t gr" style="top:614px;font-size:11px;right:1203.7px;text-align:right;">0,00</div>
<div class="t gr" style="top:614px;font-size:11px;right:1152.7px;text-align:right;">0,00</div>
<div class="t gr" style="top:614px;font-size:11px;right:1085.7px;text-align:right;">0,00</div>
<div class="t g" style="top:614px;font-size:11px;left:259.5px;">EUR</div>
<div class="t gr" style="top:614px;font-size:11px;right:976.7px;text-align:right;">0,00</div>
<div class="t gr" style="top:614px;font-size:11px;right:925.7px;text-align:right;">0,00</div>
<div class="t gr" style="top:614px;font-size:11px;right:858.7px;text-align:right;">0,00</div>
<div class="t g" style="top:614px;font-size:11px;left:486.5px;">CHF</div>
<div class="t g" style="top:631px;font-size:11px;left:15px;">2024/12</div>
<div class="t gr" style="top:631px;font-size:11px;right:1203.7px;text-align:right;">0,00</div>
<div class="t gr" style="top:631px;font-size:11px;right:1152.7px;text-align:right;">0,00</div>
<div class="t gr" style="top:631px;font-size:11px;right:1085.7px;text-align:right;">0,00</div>
<div class="t g" style="top:631px;font-size:11px;left:259.5px;">EUR</div>
<div class="t gr" style="top:631px;font-size:11px;right:976.7px;text-align:right;">0,00</div>
<div class="t gr" style="top:631px;font-size:11px;right:925.7px;text-align:right;">0,00</div>
<div class="t gr" style="top:631px;font-size:11px;right:858.7px;text-align:right;">0,00</div>
<div class="t g" style="top:631px;font-size:11px;left:486.5px;">CHF</div>
<div class="t g" style="top:648px;font-size:11px;left:15px;">EJ</div>
<div class="t gr" style="top:648px;font-size:11px;right:1203.7px;text-align:right;">0,00</div>
<div class="t gr" style="top:648px;font-size:11px;right:1152.7px;text-align:right;">0,00</div>
<div class="t gr" style="top:648px;font-size:11px;right:1085.7px;text-align:right;">0,00</div>
<div class="t g" style="top:648px;font-size:11px;left:259.5px;">EUR</div>
<div class="t gr" style="top:648px;font-size:11px;right:976.7px;text-align:right;">0,00</div>
<div class="t gr" style="top:648px;font-size:11px;right:925.7px;text-align:right;">0,00</div>
<div class="t gr" style="top:648px;font-size:11px;right:858.7px;text-align:right;">0,00</div>
<div class="t g" style="top:648px;font-size:11px;left:486.5px;">CHF</div>
<div class="t g" style="top:682px;font-size:11px;left:15px;">Summe</div>
<div class="t gr" style="top:682px;font-size:11px;right:1203.7px;text-align:right;">28.209,27</div>
<div class="t gr" style="top:682px;font-size:11px;right:1152.7px;text-align:right;">0,00</div>
<div class="t gr" style="top:682px;font-size:11px;right:1085.7px;text-align:right;">28.209,27</div>
<div class="t g" style="top:682px;font-size:11px;left:259.5px;">EUR</div>
<div class="t gr" style="top:682px;font-size:11px;right:976.7px;text-align:right;">26.937,03</div>
<div class="t gr" style="top:682px;font-size:11px;right:925.7px;text-align:right;">0,00</div>
<div class="t gr" style="top:682px;font-size:11px;right:858.7px;text-align:right;">26.937,03</div>
<div class="t g" style="top:682px;font-size:11px;left:486.5px;">CHF</div>
</body></html>
